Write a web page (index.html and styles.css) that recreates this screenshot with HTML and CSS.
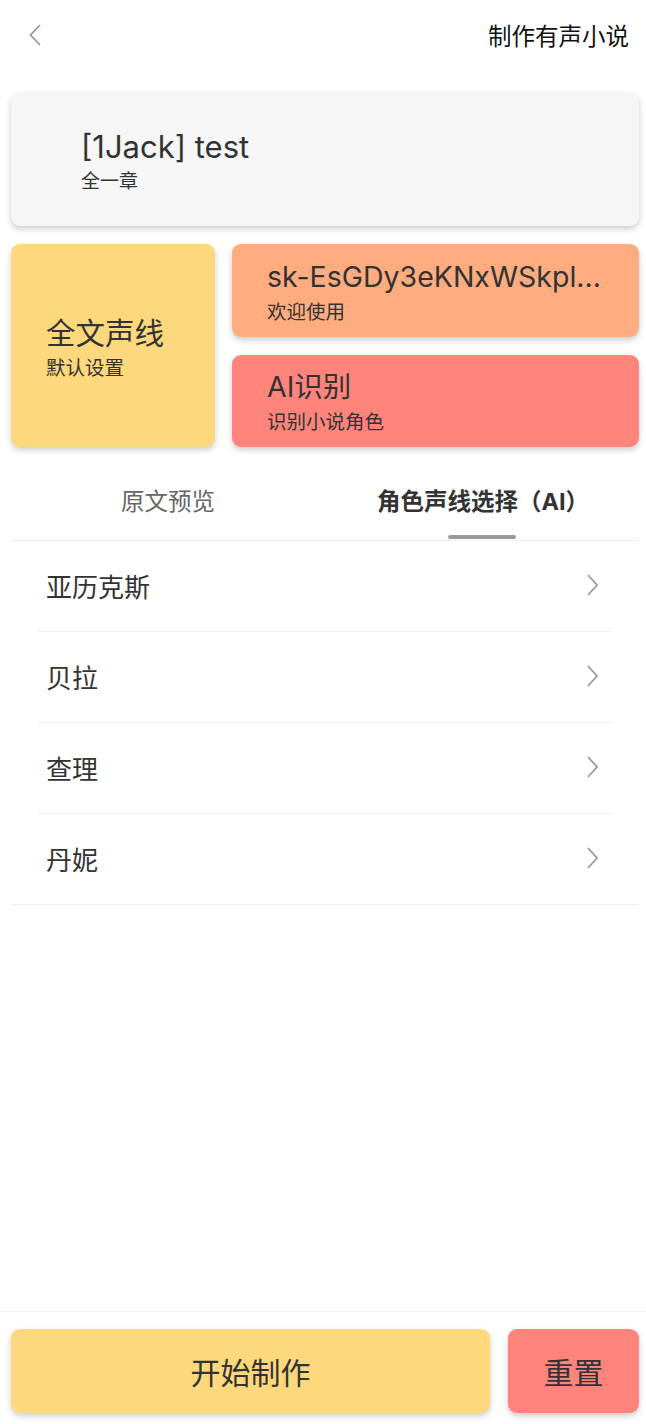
FILE: index.html
```html
<!DOCTYPE html>
<html lang="zh-CN">
<head>
    <meta charset="UTF-8">
    <meta name="viewport" content="width=device-width, initial-scale=1.0">
    <title>制作有声小说</title>
    <link rel="stylesheet" href="styles.css">
</head>
<body>
    <header class="topbar">
        <svg class="back" width="12" height="22" viewBox="0 0 12 22">
            <polyline points="11,1 1.5,11 11,21" fill="none" stroke="#9a9a9a" stroke-width="1.8"/>
        </svg>
        <h1 class="title">制作有声小说</h1>
    </header>

    <main class="content">
        <div class="card book">
            <div class="card-title">[1Jack] test</div>
            <div class="card-sub">全一章</div>
        </div>

        <div class="tiles">
            <div class="card tile voice">
                <div class="tile-title">全文声线</div>
                <div class="tile-sub">默认设置</div>
            </div>
            <div class="card tile key">
                <div class="tile-title clip">sk-EsGDy3eKNxWSkpl...</div>
                <div class="tile-sub">欢迎使用</div>
            </div>
            <div class="card tile ai">
                <div class="tile-title">AI识别</div>
                <div class="tile-sub">识别小说角色</div>
            </div>
        </div>

        <div class="tabs">
            <div class="tab">
                <span>原文预览</span>
            </div>
            <div class="tab active">
                <span>角色声线选择（AI）</span>
                <i class="bar"></i>
            </div>
        </div>

        <ul class="roles">
            <li><span>亚历克斯</span><svg width="11" height="22" viewBox="0 0 11 22"><polyline points="1,1 10,11 1,21" fill="none" stroke="#9a9a9a" stroke-width="1.8"/></svg></li>
            <li><span>贝拉</span><svg width="11" height="22" viewBox="0 0 11 22"><polyline points="1,1 10,11 1,21" fill="none" stroke="#9a9a9a" stroke-width="1.8"/></svg></li>
            <li><span>查理</span><svg width="11" height="22" viewBox="0 0 11 22"><polyline points="1,1 10,11 1,21" fill="none" stroke="#9a9a9a" stroke-width="1.8"/></svg></li>
            <li><span>丹妮</span><svg width="11" height="22" viewBox="0 0 11 22"><polyline points="1,1 10,11 1,21" fill="none" stroke="#9a9a9a" stroke-width="1.8"/></svg></li>
        </ul>
    </main>

    <footer class="actions">
        <button class="btn start">开始制作</button>
        <button class="btn reset">重置</button>
    </footer>
</body>
</html>
```

FILE: styles.css
```css
* {
    margin: 0;
    padding: 0;
    box-sizing: border-box;
}
body {
    background: white;
    font-family: Inter, "Noto Sans CJK SC", sans-serif;
    color: #333;
    min-height: 100vh;
    display: flex;
    flex-direction: column;
}
.topbar {
    height: 70px;
    display: flex;
    justify-content: space-between;
    align-items: center;
    padding: 0 17px 0 29px;
}
.title {
    font-size: 23.5px;
    font-weight: normal;
    color: #111;
}
.content {
    flex: 1;
    padding: 22px 7px 0 11px;
}
.card {
    border-radius: 9px;
    box-shadow: 0 3px 6px rgba(0,0,0,0.2);
    display: flex;
    flex-direction: column;
    justify-content: center;
}
.book {
    height: 134px;
    background: #f6f6f6;
    padding: 6px 0 0 70px;
}
.card-title {
    font-size: 31px;
    line-height: 40px;
}
.card-sub {
    font-size: 19px;
    line-height: 30px;
}
.tiles {
    margin-top: 18px;
    display: grid;
    grid-template-columns: 204px 1fr;
    grid-template-rows: 93px 92px;
    column-gap: 17px;
    row-gap: 18px;
}
.tile {
    padding: 4px 20px 0 35px;
    min-width: 0;
}
.voice {
    grid-row: 1 / 3;
    background: #fed87c;
    padding-top: 6px;
}
.key {
    background: #ffad80;
}
.ai {
    background: #ff847c;
}
.tile-title {
    font-size: 28.5px;
    line-height: 34px;
}
.voice .tile-title {
    font-size: 29.5px;
}
.clip {
    white-space: nowrap;
    overflow: hidden;
    text-overflow: ellipsis;
}
.tile-sub {
    margin-top: 4px;
    font-size: 19.5px;
    line-height: 28px;
}
.tabs {
    margin-top: 18px;
    display: flex;
    border-bottom: 1px solid #eeeeee;
}
.tab {
    flex: 1;
    height: 75px;
    padding-top: 22px;
    display: flex;
    flex-direction: column;
    align-items: center;
    font-size: 23.5px;
    line-height: 30px;
    color: #666;
}
.tab.active {
    color: #333;
    font-weight: bold;
}
.tab.active span {
    margin-left: 2px;
}
.bar {
    margin-top: auto;
    margin-bottom: 1px;
    width: 68px;
    height: 4px;
    border-radius: 2px;
    background: #999;
}
.roles {
    list-style: none;
    padding: 0 27px;
    border-bottom: 1px solid #f0f0f0;
}
.roles li {
    height: 91px;
    display: flex;
    justify-content: space-between;
    align-items: center;
    padding: 0 14px 2px 8px;
    border-bottom: 1px solid #f0f0f0;
    font-size: 26px;
}
.roles li:last-child {
    height: 90px;
    border-bottom: none;
}
.actions {
    display: flex;
    gap: 18px;
    padding: 17px 7px 11px 11px;
    border-top: 1px solid #f8f4ec;
}
.btn {
    height: 84px;
    border: none;
    border-radius: 9px;
    box-shadow: 0 3px 6px rgba(0,0,0,0.2);
    font-family: Inter, "Noto Sans CJK SC", sans-serif;
    font-size: 30px;
    color: #333;
}
.start {
    flex: 1;
    background: #fed87c;
}
.reset {
    width: 131px;
    background: #ff847c;
}
```
